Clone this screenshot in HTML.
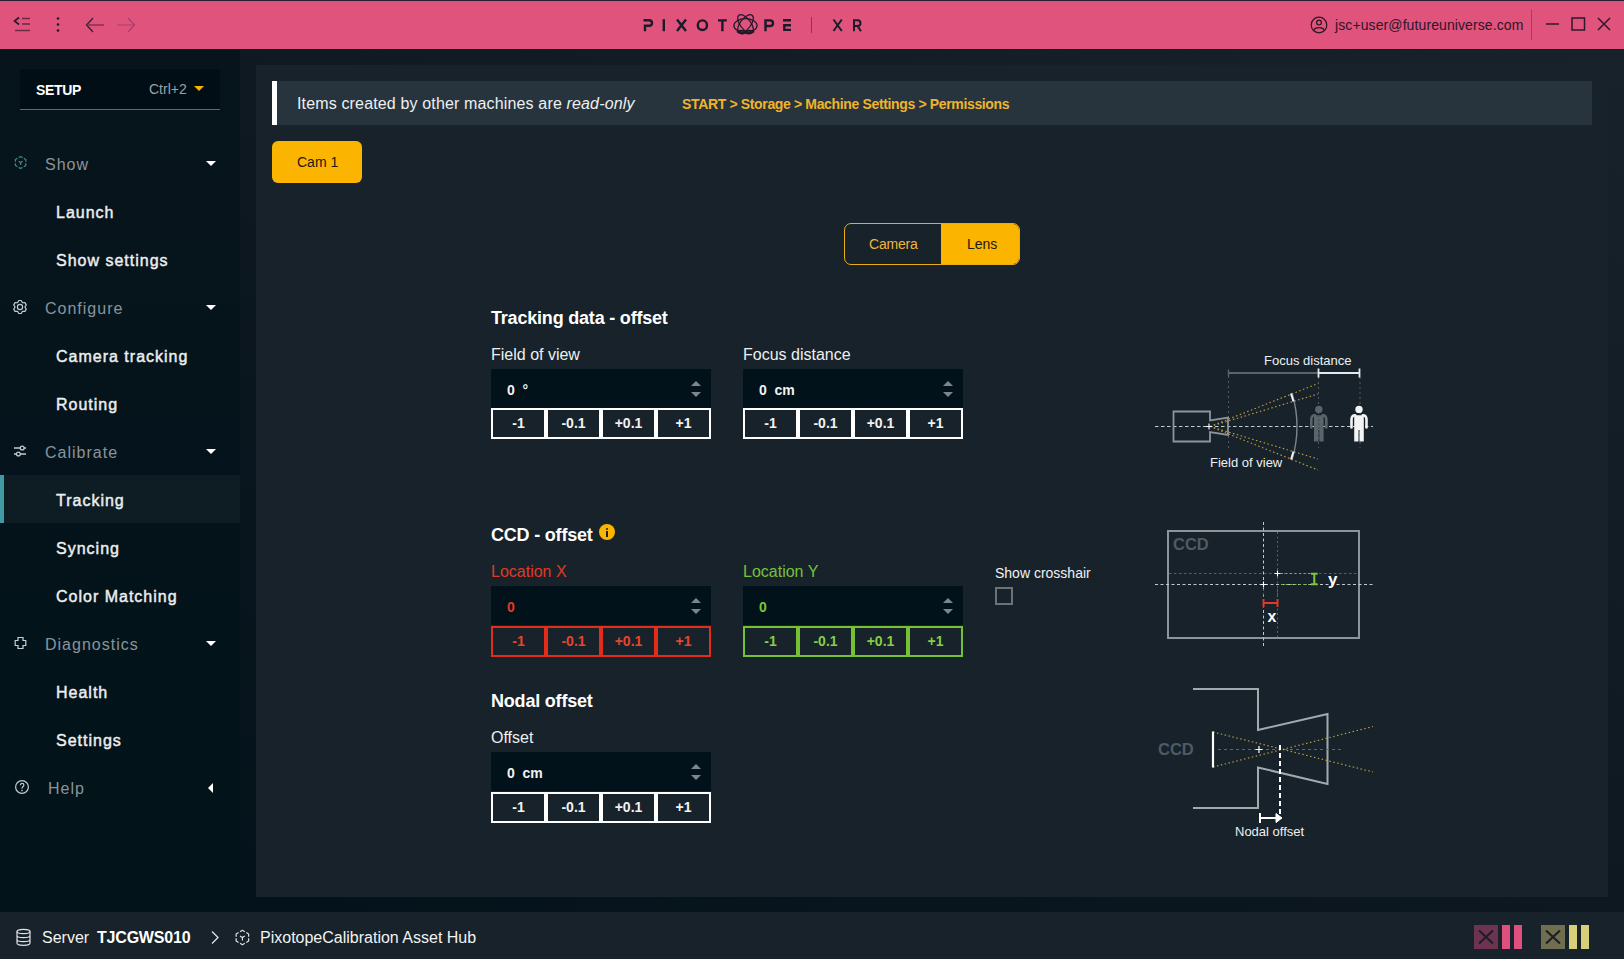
<!DOCTYPE html>
<html><head><meta charset="utf-8">
<style>
*{margin:0;padding:0;box-sizing:border-box}
html,body{width:1624px;height:959px;overflow:hidden;background:#0c171f;}
#bg{left:0;top:49px;width:1624px;height:863px;background:linear-gradient(to bottom left,#17222a 0%,#0d1820 50%,#02111a 100%)}
body{font-family:"Liberation Sans",sans-serif;color:#f2f2f2}
.abs{position:absolute}
#hdr{left:0;top:0;width:1624px;height:49px;background:#e0537d;border-top:1px solid #2a1f33}
#side{left:0;top:49px;width:240px;height:863px;background:linear-gradient(to bottom,#07141c,#02131a)}
#main{left:256px;top:65px;width:1352px;height:832px;background:#17222a}
#status{left:0;top:912px;width:1624px;height:47px;background:#17222a}
.t{position:absolute;white-space:nowrap;line-height:1}
.nav-g{font-size:16px;color:#8a949a;letter-spacing:1px;margin-top:1.5px}
.nav-i{font-size:16px;color:#eceeef;font-weight:normal;-webkit-text-stroke:0.45px #eceeef;letter-spacing:1px;margin-top:1.5px}
.caretl{position:absolute;width:0;height:0;border-top:5px solid transparent;border-bottom:5px solid transparent;border-right:5px solid #fff}
.caret{position:absolute;width:0;height:0;border-left:5px solid transparent;border-right:5px solid transparent;border-top:5px solid #fff}
.h2{font-size:18px;font-weight:bold;color:#fff;letter-spacing:-0.2px}
.lbl{font-size:16px;color:#eef0f0}
.btn{position:absolute;width:55px;height:31px;border:2px solid #fff;background:#17222a;font-size:14px;font-weight:bold;text-align:center;line-height:27px;letter-spacing:0px}
</style></head><body>

<div id="bg" class="abs"></div>
<div class="abs" style="left:0;top:49px;width:1624px;height:1px;background:#120f1a;z-index:1"></div>
<div id="hdr" class="abs">
 <svg class="abs" style="left:0;top:-1px" width="1624" height="49" viewBox="0 0 1624 49">
  <g stroke="#1e1a2a" fill="none" stroke-width="1.6">
   <path d="M19 17.5 L14.5 21 L19 24.5"/>
   <path d="M22 18.5 H30 M22 24 H30" stroke-width="1.4" stroke="#6a2a45"/>
   <path d="M15 30.5 H30" stroke-width="1.4" stroke="#6a2a45"/>
  </g>
  <g fill="#1e1a2a"><circle cx="58" cy="18.5" r="1.3"/><circle cx="58" cy="24.5" r="1.3"/><circle cx="58" cy="30.5" r="1.3"/></g>
  <path d="M93 18 L86.5 25 L93 32" stroke="#2a1f33" fill="none" stroke-width="1.2"/>
  <path d="M87 25 H104" stroke="#7a2c4c" fill="none" stroke-width="1.3"/>
  <path d="M128 18 L134.5 25 L128 32 M117 25 H134" stroke="#a8406a" fill="none" stroke-width="1.2"/>
  <!-- logo -->
  <g stroke="#1c1a28" fill="none" stroke-width="2.4" stroke-linejoin="miter">
   <path d="M645 31.2 V25.8 H649 Q652 25.8 652 22.9 Q652 20.3 649 20.3 H643.5"/>
   <path d="M663.8 19.2 V31.2"/>
   <path d="M677 19.5 L686 31 M686 19.5 L677 31"/>
   <ellipse cx="702.4" cy="25.2" rx="4.6" ry="4.8"/>
   <path d="M718 20.4 H726.8 M722.4 20.4 V31.2"/>
   <path d="M765.5 31.2 V20.4 H770 Q773 20.4 773 23.2 Q773 26 770 26 H765.5"/>
   <path d="M783 20.3 H791 M791 25.3 H784.3 V29.9 H791"/>
  </g>
  <g stroke="#1c1a28" fill="none" stroke-width="1.2">
   <ellipse cx="745.5" cy="23.8" rx="10.8" ry="5.2" transform="rotate(-52 745.5 23.8)"/>
   <ellipse cx="745.5" cy="23.8" rx="10.8" ry="5.2" transform="rotate(52 745.5 23.8)"/>
   <ellipse cx="745.5" cy="25.5" rx="11.6" ry="6.8"/>
   <path d="M737.5 31.8 Q741.5 29.5 745.5 31.6 Q749.5 29.5 753.5 31.8 Q749.5 35 745.5 32.8 Q741.5 35 737.5 31.8 Z" stroke-width="1.5"/>
  </g>
  <path d="M811.5 17 V33" stroke="#8e3556" stroke-width="1"/>
  <g stroke="#1c1a28" fill="none" stroke-width="2">
   <path d="M833.5 19.5 L841.8 31 M841.8 19.5 L833.5 31"/>
   <path d="M854 31.2 V20.3 H857.5 Q860.5 20.3 860.5 23.2 Q860.5 26 857.5 26 H854 M857.5 26 L861 31.2"/>
  </g>
  <!-- user -->
  <g stroke="#2b1425" fill="none" stroke-width="1.2">
   <circle cx="1319" cy="25" r="7.8"/>
   <circle cx="1319" cy="22.6" r="2.4"/>
   <path d="M1313.6 30.6 Q1314.5 27.6 1319 27.6 Q1323.5 27.6 1324.4 30.6"/>
  </g>
  <path d="M1531.5 9.5 V40" stroke="#a63d64" stroke-width="1"/>
  <g stroke="#2b1a2a" fill="none" stroke-width="1.5">
   <path d="M1546 24 H1559"/>
   <rect x="1572" y="18" width="12.5" height="12"/>
   <path d="M1598 18 L1610 30 M1610 18 L1598 30"/>
  </g>
 </svg>
 <div class="t" style="left:1335px;top:17px;font-size:14px;color:#2e1527;letter-spacing:0.1px">jsc+user@futureuniverse.com</div>
</div>
<div id="side" class="abs"><svg class="abs" style="left:0;top:0" width="240" height="863" viewBox="0 49 240 863">
 <g stroke="#3d8585" fill="none" stroke-width="1.3" stroke-linejoin="round">
  <path d="M18.63 157.64 L20.60 156.50 L22.57 157.64 M23.82 158.36 L25.80 159.50 L25.80 161.78 M25.80 163.22 L25.80 165.50 L23.82 166.64 M22.57 167.36 L20.60 168.50 L18.63 167.36 M17.38 166.64 L15.40 165.50 L15.40 163.22 M15.40 161.78 L15.40 159.50 L17.38 158.36 "/>
  <path d="M18.6 161.2 L20.6 162.6 L22.6 161.2 M20.6 162.6 V165"/>
 </g>
 <g stroke="#c3cbcf" fill="none" stroke-width="1.2">
  <path d="M18.74 300.52 L21.26 300.52 L22.45 302.76 L24.98 302.67 L26.24 304.85 L24.90 307.00 L26.24 309.15 L24.98 311.33 L22.45 311.24 L21.26 313.48 L18.74 313.48 L17.55 311.24 L15.02 311.33 L13.76 309.15 L15.10 307.00 L13.76 304.85 L15.02 302.67 L17.55 302.76 Z" stroke-linejoin="round"/>
  <circle cx="20" cy="307" r="2.6"/>
 </g>
 <g stroke="#c3cbcf" fill="none" stroke-width="1.3">
  <path d="M14 448 H20.2 M24.2 448 H26 M14 454 H16.4 M20.4 454 H26"/>
  <circle cx="22.2" cy="448" r="1.9"/>
  <circle cx="18.4" cy="454" r="1.9"/>
 </g>
 <path d="M18 637.5 H23 V640.5 H25.8 V645.5 H23 V648.5 H18 V645.5 H15.2 V640.5 H18 Z" stroke="#c8d0d4" fill="none" stroke-width="1.2"/>
 <g stroke="#c3cbcf" fill="none" stroke-width="1.2">
  <circle cx="22" cy="787" r="6.4"/>
  <path d="M20.3 785.2 Q20.3 783.3 22.1 783.3 Q23.9 783.3 23.9 785 Q23.9 786.2 22.6 786.9 Q22 787.3 22 788.8"/>
 </g>
 <circle cx="22" cy="790.6" r="0.8" fill="#c3cbcf"/>
</svg><div class="abs" style="left:0;top:-49px;width:240px;height:959px"><div class="abs" style="left:20px;top:69px;width:200px;height:41px;background:#020e16;border-bottom:1px solid #5f6a70"></div><div class="t" style="left:36px;top:83px;font-size:14px;font-weight:bold;color:#fff;letter-spacing:-0.35px">SETUP</div><div class="t" style="left:149px;top:82px;font-size:14px;color:#9aa2a7">Ctrl+2</div><div class="abs" style="left:194px;top:86px;width:0;height:0;border-left:5px solid transparent;border-right:5px solid transparent;border-top:5.5px solid #fbb400"></div><div class="abs" style="left:0;top:475px;width:240px;height:48px;background:#0e1c24"></div><div class="abs" style="left:0;top:475px;width:4px;height:48px;background:#419aa2"></div><div class="t nav-g" style="left:45px;top:155px">Show</div><div class="caret" style="left:206px;top:161px"></div><div class="t nav-i" style="left:56px;top:203px">Launch</div><div class="t nav-i" style="left:56px;top:251px">Show settings</div><div class="t nav-g" style="left:45px;top:299px">Configure</div><div class="caret" style="left:206px;top:305px"></div><div class="t nav-i" style="left:56px;top:347px">Camera tracking</div><div class="t nav-i" style="left:56px;top:395px">Routing</div><div class="t nav-g" style="left:45px;top:443px">Calibrate</div><div class="caret" style="left:206px;top:449px"></div><div class="t nav-i" style="left:56px;top:491px">Tracking</div><div class="t nav-i" style="left:56px;top:539px">Syncing</div><div class="t nav-i" style="left:56px;top:587px">Color Matching</div><div class="t nav-g" style="left:45px;top:635px">Diagnostics</div><div class="caret" style="left:206px;top:641px"></div><div class="t nav-i" style="left:56px;top:683px">Health</div><div class="t nav-i" style="left:56px;top:731px">Settings</div><div class="t nav-g" style="left:48px;top:779px">Help</div><div class="caretl" style="left:208px;top:783px"></div></div></div>
<div id="main" class="abs"></div>
<div class="abs" style="left:272px;top:81px;width:1320px;height:44px;background:#27343e;border-left:5px solid #fff"></div>
<div class="t" style="left:297px;top:96px;font-size:16px;color:#eef0f0;letter-spacing:0.15px">Items created by other machines are <i>read-only</i></div>
<div class="t" style="left:682px;top:97px;font-size:14px;font-weight:bold;color:#f0b42a;letter-spacing:-0.35px">START &gt; Storage &gt; Machine Settings &gt; Permissions</div>
<div class="abs" style="left:272px;top:141px;width:90px;height:42px;background:#fbb400;border-radius:6px"></div>
<div class="t" style="left:297px;top:155px;font-size:14px;color:#1b1a16">Cam 1</div>
<div class="abs" style="left:844px;top:223px;width:176px;height:42px;border:1.5px solid #e9ac14;border-radius:7px;overflow:hidden">
 <div class="abs" style="left:95.5px;top:0;width:80px;height:42px;background:#fbb400"></div>
</div>
<div class="t" style="left:869px;top:237px;font-size:14px;color:#f0b43c;letter-spacing:-0.2px">Camera</div>
<div class="t" style="left:967px;top:237px;font-size:14px;color:#1b1a16">Lens</div>

<div class="t h2" style="left:491px;top:308.5px">Tracking data - offset</div>
<div class="t lbl" style="left:491px;top:346.5px">Field of view</div>
<div class="t lbl" style="left:743px;top:346.5px">Focus distance</div>
<div class="abs" style="left:491px;top:369px;width:220px;height:39px;background:#01121a"></div>
<div class="t" style="left:507px;top:383px;font-size:14px;font-weight:bold;color:#f2f2f2">0 &nbsp;°</div>
<div class="abs" style="left:691px;top:381px;width:0;height:0;border-left:5px solid transparent;border-right:5px solid transparent;border-bottom:5.5px solid #7d868b"></div>
<div class="abs" style="left:691px;top:392px;width:0;height:0;border-left:5px solid transparent;border-right:5px solid transparent;border-top:5.5px solid #7d868b"></div>
<div class="btn" style="left:491px;top:408px;border-color:#ffffff;color:#f2f2f2">-1</div><div class="btn" style="left:546px;top:408px;border-color:#ffffff;color:#f2f2f2">-0.1</div><div class="btn" style="left:601px;top:408px;border-color:#ffffff;color:#f2f2f2">+0.1</div><div class="btn" style="left:656px;top:408px;border-color:#ffffff;color:#f2f2f2">+1</div><div class="abs" style="left:743px;top:369px;width:220px;height:39px;background:#01121a"></div>
<div class="t" style="left:759px;top:383px;font-size:14px;font-weight:bold;color:#f2f2f2">0 &nbsp;cm</div>
<div class="abs" style="left:943px;top:381px;width:0;height:0;border-left:5px solid transparent;border-right:5px solid transparent;border-bottom:5.5px solid #7d868b"></div>
<div class="abs" style="left:943px;top:392px;width:0;height:0;border-left:5px solid transparent;border-right:5px solid transparent;border-top:5.5px solid #7d868b"></div>
<div class="btn" style="left:743px;top:408px;border-color:#ffffff;color:#f2f2f2">-1</div><div class="btn" style="left:798px;top:408px;border-color:#ffffff;color:#f2f2f2">-0.1</div><div class="btn" style="left:853px;top:408px;border-color:#ffffff;color:#f2f2f2">+0.1</div><div class="btn" style="left:908px;top:408px;border-color:#ffffff;color:#f2f2f2">+1</div>
<div class="t h2" style="left:491px;top:525.5px">CCD - offset</div>
<div class="abs" style="left:599px;top:524px;width:16px;height:16px;border-radius:50%;background:#fbb400"></div>
<div class="abs" style="left:606px;top:527.5px;width:2.2px;height:2.2px;background:#17222a;border-radius:50%"></div>
<div class="abs" style="left:606px;top:531px;width:2.2px;height:6px;background:#17222a"></div>
<div class="t lbl" style="left:491px;top:564px;color:#e03a25">Location X</div>
<div class="t lbl" style="left:743px;top:564px;color:#76c13a">Location Y</div>
<div class="t" style="left:995px;top:565.5px;font-size:14px;color:#f2f2f2">Show crosshair</div>
<div class="abs" style="left:995px;top:587px;width:18px;height:18px;border:2px solid #6a7378"></div>
<div class="abs" style="left:491px;top:586px;width:220px;height:39px;background:#01121a"></div>
<div class="t" style="left:507px;top:600px;font-size:14px;font-weight:bold;color:#e5391f">0</div>
<div class="abs" style="left:691px;top:598px;width:0;height:0;border-left:5px solid transparent;border-right:5px solid transparent;border-bottom:5.5px solid #7d868b"></div>
<div class="abs" style="left:691px;top:609px;width:0;height:0;border-left:5px solid transparent;border-right:5px solid transparent;border-top:5.5px solid #7d868b"></div>
<div class="btn" style="left:491px;top:626px;border-color:#e12d1a;color:#e8452c">-1</div><div class="btn" style="left:546px;top:626px;border-color:#e12d1a;color:#e8452c">-0.1</div><div class="btn" style="left:601px;top:626px;border-color:#e12d1a;color:#e8452c">+0.1</div><div class="btn" style="left:656px;top:626px;border-color:#e12d1a;color:#e8452c">+1</div><div class="abs" style="left:743px;top:586px;width:220px;height:39px;background:#01121a"></div>
<div class="t" style="left:759px;top:600px;font-size:14px;font-weight:bold;color:#7cc53a">0</div>
<div class="abs" style="left:943px;top:598px;width:0;height:0;border-left:5px solid transparent;border-right:5px solid transparent;border-bottom:5.5px solid #7d868b"></div>
<div class="abs" style="left:943px;top:609px;width:0;height:0;border-left:5px solid transparent;border-right:5px solid transparent;border-top:5.5px solid #7d868b"></div>
<div class="btn" style="left:743px;top:626px;border-color:#74c133;color:#86ce44">-1</div><div class="btn" style="left:798px;top:626px;border-color:#74c133;color:#86ce44">-0.1</div><div class="btn" style="left:853px;top:626px;border-color:#74c133;color:#86ce44">+0.1</div><div class="btn" style="left:908px;top:626px;border-color:#74c133;color:#86ce44">+1</div>
<div class="t h2" style="left:491px;top:692px">Nodal offset</div>
<div class="t lbl" style="left:491px;top:730px">Offset</div>
<div class="abs" style="left:491px;top:752px;width:220px;height:39px;background:#01121a"></div>
<div class="t" style="left:507px;top:766px;font-size:14px;font-weight:bold;color:#f2f2f2">0 &nbsp;cm</div>
<div class="abs" style="left:691px;top:764px;width:0;height:0;border-left:5px solid transparent;border-right:5px solid transparent;border-bottom:5.5px solid #7d868b"></div>
<div class="abs" style="left:691px;top:775px;width:0;height:0;border-left:5px solid transparent;border-right:5px solid transparent;border-top:5.5px solid #7d868b"></div>
<div class="btn" style="left:491px;top:792px;border-color:#ffffff;color:#f2f2f2">-1</div><div class="btn" style="left:546px;top:792px;border-color:#ffffff;color:#f2f2f2">-0.1</div><div class="btn" style="left:601px;top:792px;border-color:#ffffff;color:#f2f2f2">+0.1</div><div class="btn" style="left:656px;top:792px;border-color:#ffffff;color:#f2f2f2">+1</div>
<div id="status" class="abs"></div>
<div class="t" style="left:42px;top:930px;font-size:16px;color:#f2f2f2">Server</div>
<div class="t" style="left:97px;top:930px;font-size:16px;font-weight:bold;color:#fff;letter-spacing:-0.2px">TJCGWS010</div>
<div class="t" style="left:260px;top:930px;font-size:16px;color:#f2f2f2">PixotopeCalibration Asset Hub</div>
<svg class="abs" style="left:0;top:0" width="1624" height="959" viewBox="0 0 1624 959">
 <!-- Diagram 1: FOV / focus -->
 <g fill="none">
  <path d="M1155 426.5 H1373" stroke="#c3c9cc" stroke-width="1.1" stroke-dasharray="3.5 2.5"/>
  <path d="M1228.5 376 V448 M1318.5 377 V448 M1360 377 V448" stroke="#4f5a61" stroke-width="1" stroke-dasharray="2 3"/>
  <path d="M1228.5 373 H1318" stroke="#5a646b" stroke-width="1.8"/>
  <path d="M1228.5 369.5 V376.5" stroke="#5a646b" stroke-width="1.4"/>
  <path d="M1318.5 373 H1359.5" stroke="#e6e9eb" stroke-width="1.8"/>
  <path d="M1318.5 368.5 V377.5 M1359.5 368.5 V377.5" stroke="#e6e9eb" stroke-width="1.8"/>
  <path d="M1173.5 411.5 H1210 V420.5 L1228 417.5 V435 L1210 432 V441.5 H1173.5 Z" stroke="#8d959a" stroke-width="1.8"/>
  <path d="M1210 426.5 L1318 383.5 M1210 426.5 L1318 394 M1210 426.5 L1318 459 M1210 426.5 L1318 470" stroke="#c09e42" stroke-width="1.15" stroke-dasharray="1.5 2.5"/>
  <path d="M1292 393 Q1302 426.5 1292 460" stroke="#7d868b" stroke-width="1.4"/>
  <path d="M1291 393.5 L1293.5 401.5 M1291 459.5 L1293.5 451.5" stroke="#f0f2f3" stroke-width="2"/>
  <path d="M1206 426.5 H1212 M1209 423.5 V429.5" stroke="#fff" stroke-width="1.1"/>
 </g>
 <g fill="#59646b">
  <circle cx="1318.8" cy="409.4" r="3.7"/>
  <path d="M1314 415.2 H1323.6 V441.5 H1319.3 V430 H1318.3 V441.5 H1314 Z"/>
 </g>
 <path d="M1311.3 427.5 V419.5 Q1311.3 415.2 1315 415.2 M1326.3 427.5 V419.5 Q1326.3 415.2 1322.6 415.2" stroke="#59646b" stroke-width="2.6" stroke-linecap="round" fill="none"/>
 <path d="M1318.8 415 V441" stroke="#3f4a51" stroke-width="1" stroke-dasharray="2 2"/>
 <g fill="#f2f4f5">
  <circle cx="1359" cy="409.4" r="3.7"/>
  <path d="M1354.2 415.2 H1363.8 V441.5 H1359.5 V430 H1358.5 V441.5 H1354.2 Z"/>
 </g>
 <path d="M1351.5 427.5 V419.5 Q1351.5 415.2 1355.2 415.2 M1366.5 427.5 V419.5 Q1366.5 415.2 1362.8 415.2" stroke="#f2f4f5" stroke-width="2.6" stroke-linecap="round" fill="none"/>
 <!-- Diagram 2: CCD -->
 <g fill="none">
  <rect x="1168" y="531" width="191" height="107" stroke="#8d959a" stroke-width="2"/>
  <path d="M1277.5 532 V637" stroke="#566168" stroke-width="1" stroke-dasharray="2 2.5"/>
  <path d="M1169 573.5 H1358" stroke="#566168" stroke-width="1" stroke-dasharray="2.5 2.5"/>
  <path d="M1263.5 522 V647" stroke="#c3c9cc" stroke-width="1" stroke-dasharray="3 2.5"/>
  <path d="M1155 584.5 H1373" stroke="#c3c9cc" stroke-width="1" stroke-dasharray="3 2.5"/>
  <path d="M1281 573.5 H1312 M1281 584.5 H1312" stroke="#79b83f" stroke-width="1.1" stroke-dasharray="2 2.5"/>
  <path d="M1314.3 574.5 V583.5 M1311 573.8 H1317.6 M1311 584.2 H1317.6" stroke="#84c441" stroke-width="2"/>
  <path d="M1263.5 589 V596 M1277.5 589 V596" stroke="#c8352a" stroke-width="1" stroke-dasharray="2 2"/>
  <path d="M1264 603 H1277 M1263.5 599 V607 M1277.5 599 V607" stroke="#e03a26" stroke-width="2"/>
  <path d="M1274.5 573.5 H1280.5 M1277.5 570.5 V576.5" stroke="#fff" stroke-width="1.1"/>
  <path d="M1260.5 584.5 H1266.5 M1263.5 581.5 V587.5" stroke="#fff" stroke-width="1.1"/>
 </g>
 <text x="1173" y="550" font-family="Liberation Sans" font-weight="bold" font-size="16.5" fill="#4f5b63">CCD</text>
 <text x="1328" y="585" font-family="Liberation Sans" font-weight="bold" font-size="17" fill="#fff">y</text>
 <text x="1267.5" y="622" font-family="Liberation Sans" font-weight="bold" font-size="16" fill="#fff">x</text>
 <!-- Diagram 3: Nodal -->
 <g fill="none">
  <path d="M1193 689 H1258 V730 L1327.5 714 V784 L1258 767.5 V808 H1193" stroke="#a3aaae" stroke-width="2"/>
  <path d="M1218 749.5 H1341" stroke="#5c676e" stroke-width="1" stroke-dasharray="3 3"/>
  <path d="M1213 732 L1373 772 M1213 767 L1373 726.5" stroke="#c09e42" stroke-width="1.15" stroke-dasharray="1.5 2.5"/>
  <path d="M1213 731.5 V767.5" stroke="#fff" stroke-width="2.2"/>
  <path d="M1255.5 749.5 H1262.5 M1259 746 V753" stroke="#fff" stroke-width="1.2"/>
  <path d="M1280 745 V815" stroke="#fff" stroke-width="2" stroke-dasharray="5 3"/>
  <path d="M1260 818 H1277 M1260 813 V823" stroke="#fff" stroke-width="2"/>
  <path d="M1276 813.5 L1282 818 L1276 822.5 Z" fill="#fff" stroke="#fff" stroke-width="1"/>
 </g>
 <text x="1158" y="755" font-family="Liberation Sans" font-weight="bold" font-size="16.5" fill="#4f5b63">CCD</text>
 <text x="1264" y="365" font-family="Liberation Sans" font-size="13" fill="#eef0f0">Focus distance</text>
 <text x="1210" y="467" font-family="Liberation Sans" font-size="13" fill="#eef0f0">Field of view</text>
 <text x="1235" y="836" font-family="Liberation Sans" font-size="13" fill="#eef0f0">Nodal offset</text>
 <!-- status bar icons -->
 <g fill="none" stroke="#dfe3e5" stroke-width="1.2">
  <ellipse cx="23.5" cy="931.5" rx="6.5" ry="2.2"/>
  <path d="M17 931.5 V943 Q17 945.3 23.5 945.3 Q30 945.3 30 943 V931.5 M17 935.5 Q17 937.7 23.5 937.7 Q30 937.7 30 935.5 M17 939.5 Q17 941.7 23.5 941.7 Q30 941.7 30 939.5"/>
  <path d="M212 931.5 L218 937.5 L212 943.5" stroke-width="1.3"/>
  <path d="M240.03 931.67 L242.40 930.30 L244.77 931.67 M246.27 932.53 L248.64 933.90 L248.64 936.64 M248.64 938.36 L248.64 941.10 L246.27 942.47 M244.77 943.33 L242.40 944.70 L240.03 943.33 M238.53 942.47 L236.16 941.10 L236.16 938.36 M236.16 936.64 L236.16 933.90 L238.53 932.53 " stroke-linejoin="round"/><path d="M240 935.9 L242.4 937.5 L244.8 935.9 M242.4 937.5 V940.5"/>
 </g>
 <rect x="1474" y="925" width="24" height="24" fill="#6e3350"/>
 <path d="M1479 930.5 L1493 943.5 M1493 930.5 L1479 943.5" stroke="#1c1f28" stroke-width="2.2"/>
 <rect x="1502" y="925" width="8" height="24" fill="#e04f7e"/>
 <rect x="1514" y="925" width="8" height="24" fill="#e04f7e"/>
 <rect x="1541" y="925" width="24" height="24" fill="#6f6e4e"/>
 <path d="M1546 930.5 L1560 943.5 M1560 930.5 L1546 943.5" stroke="#1c1f28" stroke-width="2.2"/>
 <rect x="1569" y="925" width="8" height="24" fill="#d8cf79"/>
 <rect x="1581" y="925" width="8" height="24" fill="#d8cf79"/>
</svg>
</body></html>
